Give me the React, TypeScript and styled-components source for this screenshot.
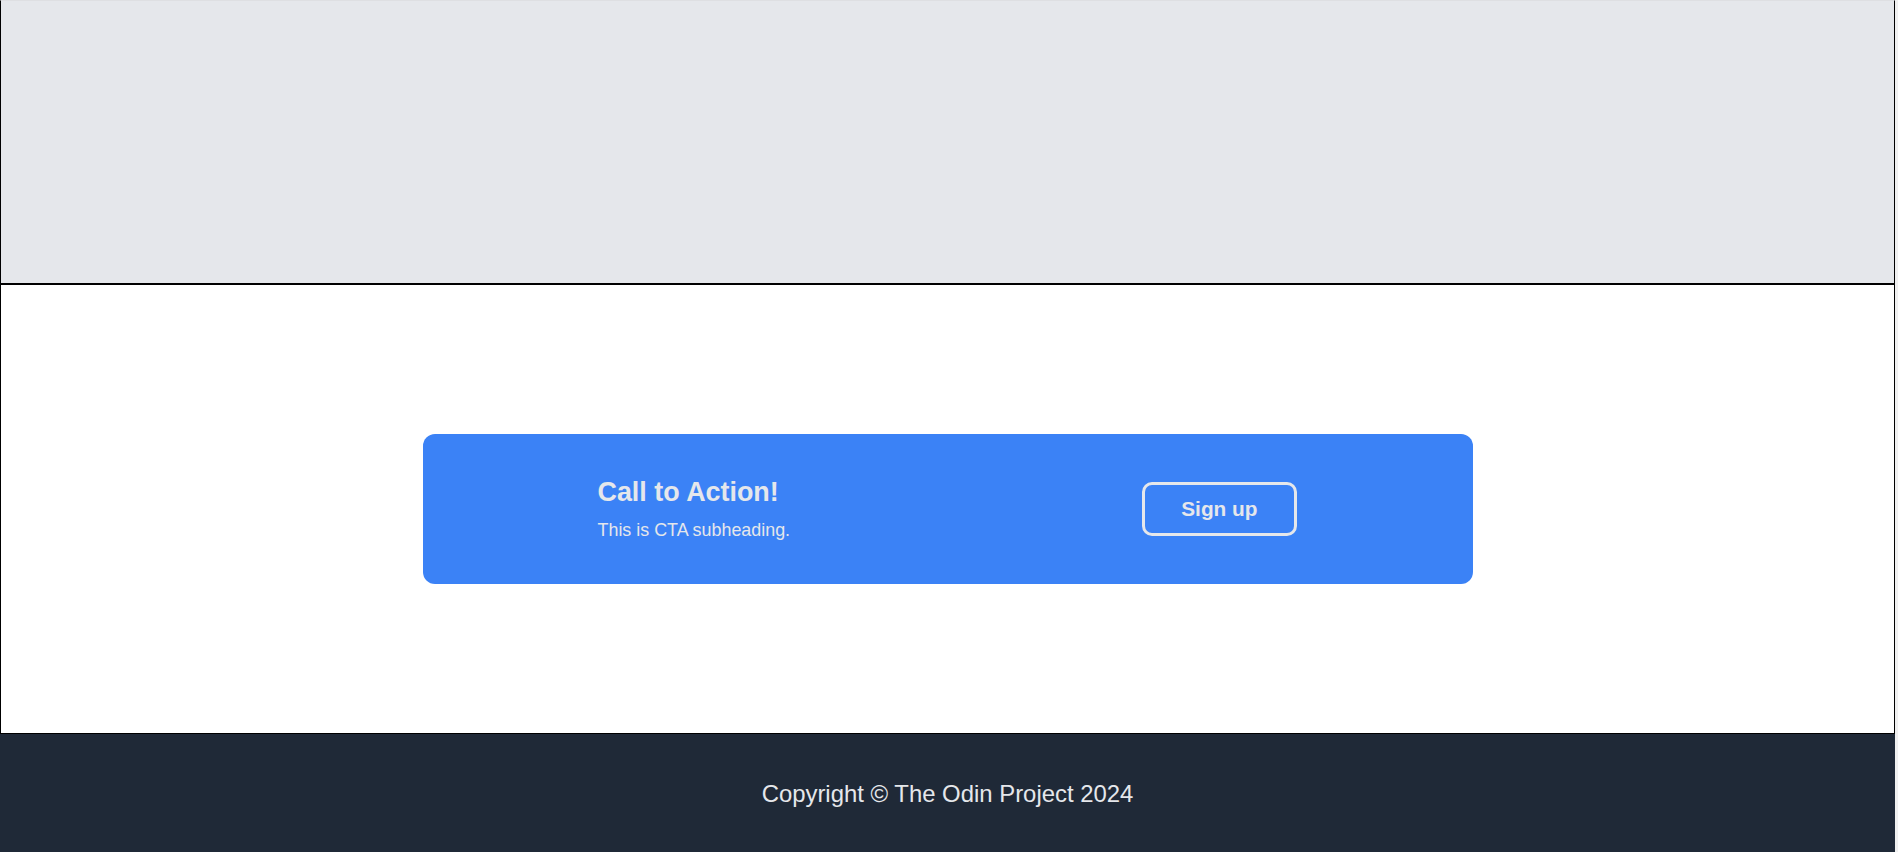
import React from "react";
import styled, { createGlobalStyle } from "styled-components";

const GlobalStyle = createGlobalStyle`
  html, body {
    margin: 0;
    padding: 0;
    background: #f0f0f0;
    font-family: "Liberation Sans", Arial, sans-serif;
  }
  * { box-sizing: border-box; }
`;

const Page = styled.div`
  width: calc(100% - 3px);
  height: 852px;
  display: flex;
  flex-direction: column;
  overflow: hidden;
`;

const Hero = styled.section`
  height: 284px;
  flex: none;
  background: #e5e7eb;
  border-top: 1px solid #dedfe2;
  border-left: 1px solid #000;
  border-right: 1px solid #000;
  border-bottom: 1px solid #000;
`;

const CtaSection = styled.section`
  height: 450px;
  flex: none;
  background: #fff;
  border: 1px solid #000;
  display: flex;
  align-items: center;
  justify-content: center;
`;

const CtaCard = styled.div`
  width: 1050px;
  height: 150px;
  background: #3b82f6;
  border-radius: 12px;
  padding: 0 176px 0 175px;
  display: flex;
  align-items: center;
  justify-content: space-between;
  color: #e5e7eb;
`;

const CtaText = styled.div`
  display: flex;
  flex-direction: column;
`;

const CtaHeading = styled.h2`
  margin: 0 0 12.6px;
  font-size: 26.9px;
  font-weight: 700;
  line-height: normal;
`;

const CtaSub = styled.p`
  margin: 0;
  font-size: 17.9px;
  line-height: normal;
`;

const SignUpButton = styled.button`
  font-family: "Liberation Sans", Arial, sans-serif;
  font-size: 20.8px;
  font-weight: 700;
  line-height: normal;
  white-space: nowrap;
  color: #e5e7eb;
  background: transparent;
  border: 3px solid #e5e7eb;
  border-radius: 10px;
  padding: 11.6px 36px;
  cursor: pointer;
`;

const Footer = styled.footer`
  flex: 1;
  background: #1f2937;
  color: #e5e7eb;
  display: flex;
  justify-content: center;
  padding-top: 46.4px;
  font-size: 23.9px;
  line-height: normal;
`;

export default function App() {
  return (
    <>
      <GlobalStyle />
      <Page>
        <Hero />
        <CtaSection>
          <CtaCard>
            <CtaText>
              <CtaHeading>Call to Action!</CtaHeading>
              <CtaSub>This is CTA subheading.</CtaSub>
            </CtaText>
            <SignUpButton>Sign up</SignUpButton>
          </CtaCard>
        </CtaSection>
        <Footer>Copyright © The Odin Project 2024</Footer>
      </Page>
    </>
  );
}
